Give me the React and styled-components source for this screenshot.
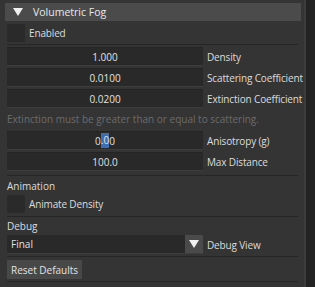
import React from "react";
import styled, { createGlobalStyle } from "styled-components";

const Global = createGlobalStyle`
  html, body { margin: 0; padding: 0; background: #333333; }
  body { font-family: "Open Sans", "Noto Sans", sans-serif; font-size: 10px; color: #dcdcdc; }
`;

const Page = styled.div`
  display: flex;
  width: 315px;
  height: 287px;
  overflow: hidden;
  background: #343434;
`;

const Content = styled.div`
  flex: 1;
  display: flex;
  flex-direction: column;
  padding: 3px 0 0 7px;
  min-width: 0;
`;

const Scrollbar = styled.div`
  width: 9px;
  background: #232323;
  border-left: 2px solid #3c3c3c;
`;

const Header = styled.div`
  display: flex;
  align-items: center;
  height: 18px;
  margin: 0 3px 3px -2px;
  background: #4b4b4b;
  color: #e8e8e8;
  font-size: 10.5px;
`;

const Arrow = styled.svg`
  width: 10px;
  height: 8px;
  margin: 0 10px 0 8px;
  fill: ${(p) => p.$color || "#f0f0f0"};
`;

const CheckRow = styled.div`
  display: flex;
  align-items: center;
  height: 18px;
  gap: 4px;
`;

const Box = styled.div`
  width: 18px;
  height: 18px;
  background: #2a2a2a;
`;

const Separator = styled.div`
  height: 1px;
  background: #262626;
  margin: ${(p) => p.$m || "3px 6px 2px 0"};
`;

const Rows = styled.div`
  display: flex;
  flex-direction: column;
  gap: 2px;
`;

const Row = styled.div`
  display: flex;
  align-items: center;
  height: 19px;
  gap: 4px;
  white-space: nowrap;
`;

const Field = styled.div`
  width: 196px;
  height: 19px;
  box-sizing: border-box;
  flex: none;
  display: flex;
  align-items: center;
  justify-content: center;
  background: #292929;
  border-top: 1px solid #242424;
  border-bottom: 1px solid #3d3d3d;
  color: #e2e2e2;
`;

const Label = styled.span`
  color: #dcdcdc;
  letter-spacing: -0.15px;
`;

const Hint = styled.div`
  height: 23px;
  line-height: 23px;
  color: #6c6c6c;
  white-space: nowrap;
`;

const Sel = styled.span`
  background: #3f6eb0;
  display: inline-block;
  height: 15px;
  line-height: 15px;
`;

const Section = styled.div`
  height: 17px;
  line-height: 17px;
  color: #dcdcdc;
`;

const Combo = styled.div`
  display: flex;
  width: 196px;
  height: 19px;
  box-sizing: border-box;
  flex: none;
  background: #292929;
  border-bottom: 1px solid #3d3d3d;
`;

const ComboText = styled.div`
  flex: 1;
  display: flex;
  align-items: center;
  padding-left: 4px;
  color: #e2e2e2;
`;

const ComboButton = styled.div`
  width: 18px;
  display: flex;
  align-items: center;
  justify-content: center;
  background: #4a4a4a;
  & svg { margin: 0; }
`;

const Button = styled.div`
  display: inline-flex;
  align-self: flex-start;
  align-items: center;
  height: 19px;
  padding: 0 4px;
  background: #484848;
  color: #e2e2e2;
`;

const Tri = ({ color }) => (
  <Arrow viewBox="0 0 10 8" $color={color}>
    <polygon points="0,0 10,0 5,8" />
  </Arrow>
);

export default function App() {
  return (
    <>
      <Global />
      <Page>
        <Content>
          <Header>
            <Tri />
            Volumetric Fog
          </Header>
          <CheckRow>
            <Box />
            <Label>Enabled</Label>
          </CheckRow>
          <Separator $m="2px 6px 2px 0" />
          <Rows>
            <Row>
              <Field>1.000</Field>
              <Label>Density</Label>
            </Row>
            <Row>
              <Field>0.0100</Field>
              <Label>Scattering Coefficient</Label>
            </Row>
            <Row>
              <Field>0.0200</Field>
              <Label>Extinction Coefficient</Label>
            </Row>
          </Rows>
          <Hint>Extinction must be greater than or equal to scattering.</Hint>
          <Rows>
            <Row>
              <Field>
                0<Sel>.0</Sel>0
              </Field>
              <Label>Anisotropy (g)</Label>
            </Row>
            <Row>
              <Field>100.0</Field>
              <Label>Max Distance</Label>
            </Row>
          </Rows>
          <Separator $m="4px 6px 2px 0" />
          <Section>Animation</Section>
          <CheckRow>
            <Box />
            <Label>Animate Density</Label>
          </CheckRow>
          <Separator $m="3px 6px 1px 0" />
          <Section>Debug</Section>
          <Row>
            <Combo>
              <ComboText>Final</ComboText>
              <ComboButton>
                <Tri />
              </ComboButton>
            </Combo>
            <Label>Debug View</Label>
          </Row>
          <Separator $m="2px 6px 3px 0" />
          <Button>Reset Defaults</Button>
          <Separator $m="2px 6px 0 0" />
        </Content>
        <Scrollbar />
      </Page>
    </>
  );
}
